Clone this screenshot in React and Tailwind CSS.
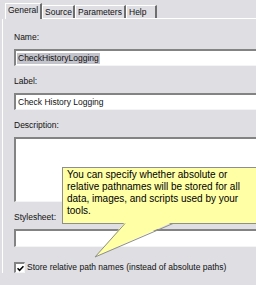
import React from "react";

const font = { fontFamily: "'Liberation Sans', Arial, sans-serif" };

function Tab({ label, active, w }) {
  if (active) {
    return (
      <div className={`${w} h-[16px] border-t border-l border-white border-r-2 border-r-[#6e6e6e] bg-[#dedee3] pl-[2px] text-[8.5px] leading-[13px] text-[#111]`}>
        {label}
      </div>
    );
  }
  return (
    <div className={`${w} h-[14px] flex flex-col`}>
      <div className="flex-1 border-t border-l border-white border-r-2 border-r-[#6e6e6e] pl-[2px] text-[8.5px] leading-[12px] text-[#111]">
        {label}
      </div>
      <div className="h-px bg-white" />
    </div>
  );
}

function Field({ children, h = "h-[17px]" }) {
  return (
    <div className={`${h} -mr-[6px] bg-white border-t-2 border-l-2 border-[#838383] border-b border-b-[#f4f4f4] flex items-center pl-[1px] text-[8.5px] text-[#111]`}>
      {children}
    </div>
  );
}

function Label({ children, className = "" }) {
  return <div className={`h-[11px] text-[8.5px] leading-[11px] text-[#111] ${className}`}>{children}</div>;
}

export default function App() {
  return (
    <div style={font} className="relative w-[256px] h-[285px] overflow-hidden bg-[#dedee3]">
      {/* tab strip */}
      <div className="flex items-end h-[19px] pl-[5px]">
        <Tab label="General" active w="w-[37px]" />
        <Tab label="Source" w="w-[33px]" />
        <Tab label="Parameters" w="w-[51px]" />
        <Tab label="Help" w="w-[31px]" />
        <div className="flex-1 self-end h-[14px] border-b border-white" />
      </div>

      {/* panel */}
      <div className="ml-[2px] border-l border-white pl-[11px] pt-[13px] flex flex-col">
        <Label>Name:</Label>
        <div className="mt-[6px]">
          <Field>
            <span className="bg-[#c3c3cb] px-[1px] leading-[11px]">CheckHistoryLogging</span>
          </Field>
        </div>

        <Label className="mt-[10px]">Label:</Label>
        <div className="mt-[6px]">
          <Field>
            <span className="px-[1px]">Check History Logging</span>
          </Field>
        </div>

        <Label className="mt-[10px]">Description:</Label>
        <div className="mt-[6px]">
          <Field h="h-[65px]" />
        </div>

        <Label className="mt-[10px]">Stylesheet:</Label>
        <div className="mt-[6px]">
          <Field h="h-[18px]" />
        </div>

        <div className="mt-[15px] flex items-center gap-[2px]">
          <div className="w-[11px] h-[11px] bg-white border-t-2 border-l-2 border-[#838383] border-b border-r border-b-[#f4f4f4] border-r-[#f4f4f4] flex items-center justify-center">
            <svg width="7" height="7" viewBox="0 0 7 7">
              <path d="M0.5 3.2 L2.6 5.4 L6.5 1.2" fill="none" stroke="#000" strokeWidth="1.6" />
            </svg>
          </div>
          <span className="text-[8.5px] leading-[11px] text-[#111] whitespace-nowrap">
            Store relative path names (instead of absolute paths)
          </span>
        </div>
      </div>

      {/* callout */}
      <div className="absolute left-[62px] top-[167px] w-[200px] h-[57px] bg-[#ffffa6] border border-[#8e8e8e] pl-[4px] pt-[1px] text-[10px] leading-[12px] text-black">
        <div>You can specify whether absolute or</div>
        <div>relative pathnames will be stored for all</div>
        <div>data, images, and scripts used by your</div>
        <div>tools.</div>
      </div>
      <svg className="absolute left-[90px] top-[222px]" width="90" height="40" viewBox="0 0 90 40">
        <polygon points="35,0 83,0 5,35" fill="#ffffa6" />
        <line x1="35" y1="1.5" x2="5" y2="35" stroke="#8e8e8e" strokeWidth="1" />
        <line x1="83" y1="1.5" x2="5" y2="35" stroke="#8e8e8e" strokeWidth="1" />
      </svg>
    </div>
  );
}
